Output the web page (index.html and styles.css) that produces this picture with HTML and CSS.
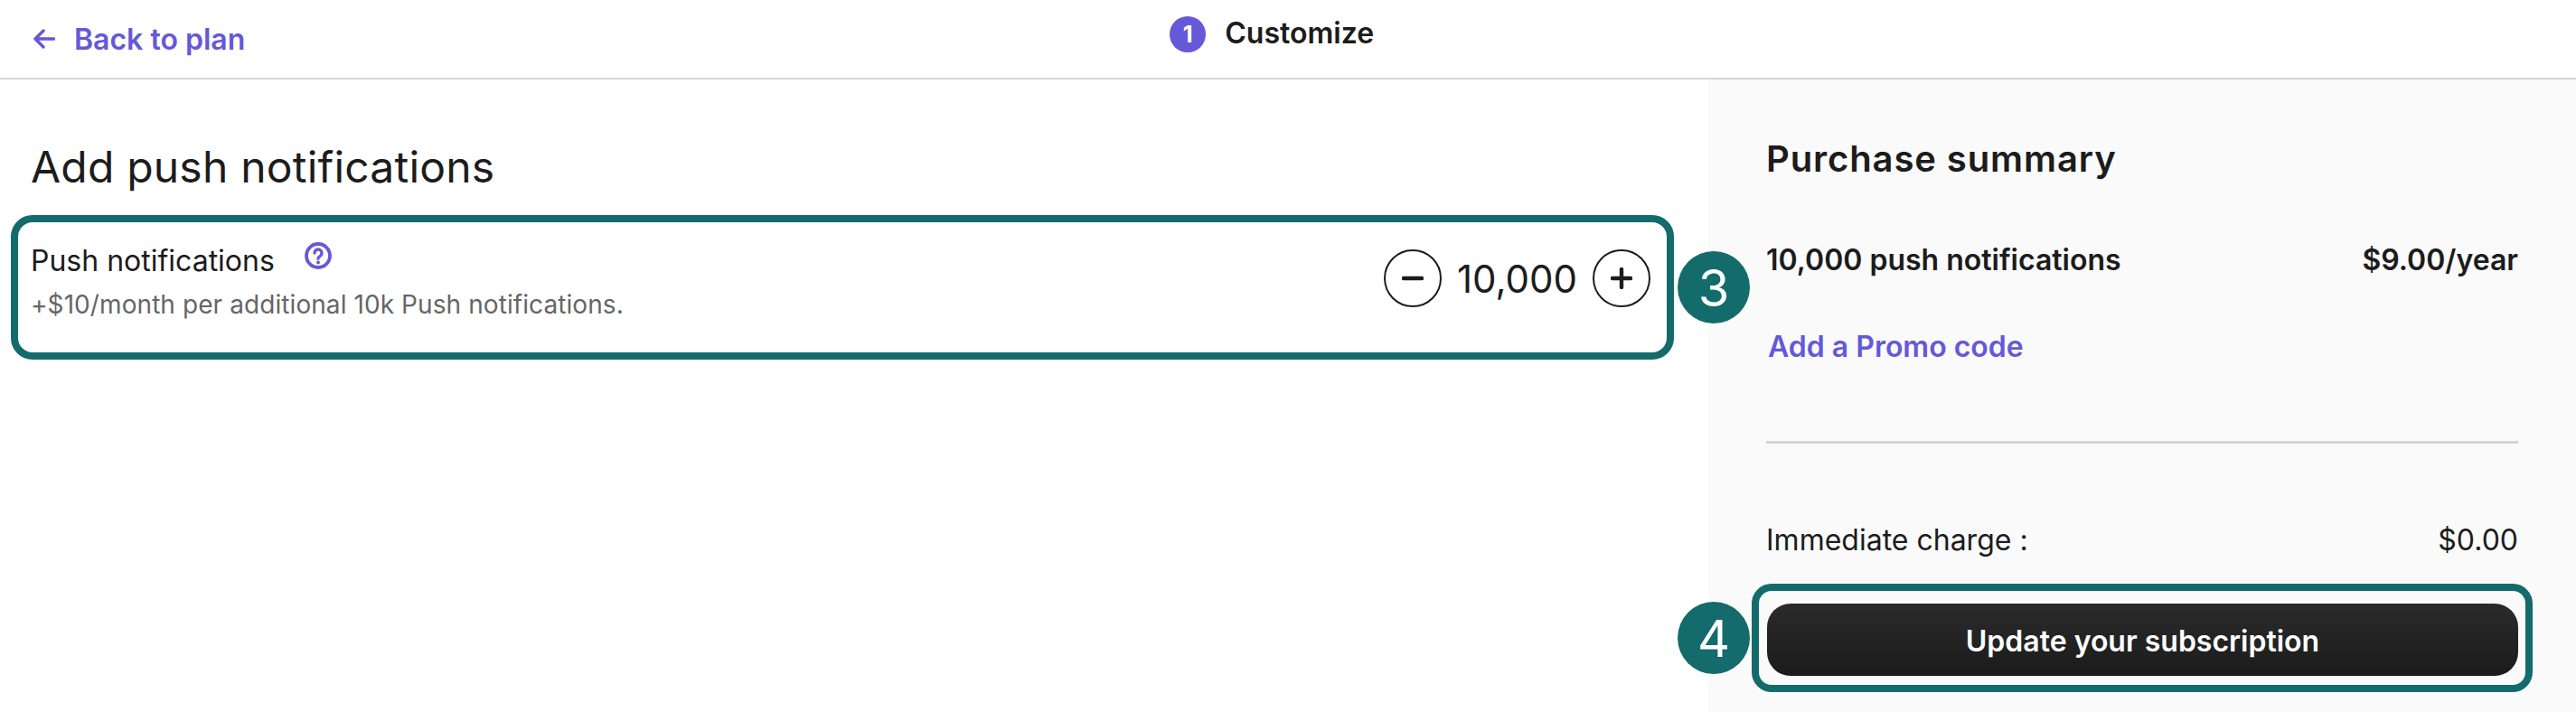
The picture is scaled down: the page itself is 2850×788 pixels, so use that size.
FILE: index.html
```html
<!DOCTYPE html>
<html lang="en">
<head>
<meta charset="utf-8">
<title>Customize</title>
<link rel="stylesheet" href="styles.css">
</head>
<body>
<header class="topbar">
  <a class="back" href="#">
    <svg class="back-icon" viewBox="0 0 24 24" fill="none" stroke="currentColor" stroke-width="3.4" stroke-linecap="round" stroke-linejoin="round"><path d="M22.5 12H2M11 3l-9 9 9 9"/></svg>
    <span>Back to plan</span>
  </a>
  <div class="step"><span class="step-num">1</span><span class="step-label">Customize</span></div>
</header>
<main class="layout">
  <section class="content">
    <h1 class="page-title">Add push notifications</h1>
    <div class="addon-frame">
      <div class="addon-text">
        <div class="addon-name">
          <span>Push notifications</span>
          <svg class="help-icon" viewBox="0 0 30 30" fill="none"><circle cx="15" cy="15" r="13" stroke="#6558d9" stroke-width="3.8"/><path d="M11 12a4 4 0 1 1 6.2 3.3c-1.4.9-2.2 1.6-2.2 3" stroke="#6558d9" stroke-width="3.4" stroke-linecap="round"/><circle cx="15" cy="22.4" r="2" fill="#6558d9"/></svg>
        </div>
        <p class="addon-desc">+$10/month per additional 10k Push notifications.</p>
      </div>
      <div class="stepper">
        <button class="round-btn" type="button"><svg viewBox="0 0 24 24"><path d="M2 12h20" stroke="#1c1c1c" stroke-width="4.4" stroke-linecap="round"/></svg></button>
        <span class="stepper-value">10,000</span>
        <button class="round-btn" type="button"><svg viewBox="0 0 24 24"><path d="M2 12h20M12 2v20" stroke="#1c1c1c" stroke-width="4.4" stroke-linecap="round"/></svg></button>
      </div>
      <span class="badge badge-three">3</span>
    </div>
  </section>
  <aside class="summary">
    <h2 class="summary-title">Purchase summary</h2>
    <div class="line line-strong"><span>10,000 push notifications</span><span>$9.00/year</span></div>
    <a class="promo" href="#">Add a Promo code</a>
    <hr class="divider">
    <div class="line line-normal"><span>Immediate charge :</span><span>$0.00</span></div>
    <div class="cta-frame">
      <span class="badge badge-four">4</span>
      <button class="cta" type="button">Update your subscription</button>
    </div>
  </aside>
</main>
</body>
</html>
```
FILE: styles.css
```css
* { box-sizing: border-box; }
html, body { margin: 0; height: 788px; overflow: hidden; }
body { font-family: Inter, "Liberation Sans", sans-serif; color: #1c1c1c; background: #fff; }

.topbar { height: 88px; border-bottom: 2px solid #d4d4d4; display: flex; align-items: flex-start; padding-left: 37px; }
.back { display: flex; align-items: center; gap: 21px; height: 86px; color: #6558d9; text-decoration: none; font-size: 32px; font-weight: 600; }
.back-icon { width: 24px; height: 24px; }
.step { display: flex; align-items: center; gap: 21px; margin-left: 1023px; height: 76px; }
.step-num { width: 40px; height: 40px; border-radius: 50%; background: #6558d9; color: #fff; font-size: 25px; font-weight: 700; display: flex; align-items: center; justify-content: center; }
.step-label { font-size: 32px; font-weight: 600; line-height: 36px; margin-top: -2px; }

.layout { display: grid; grid-template-columns: 1890px 960px; height: 700px; }
.content { padding: 69px 38px 0 12px; }
.page-title { margin: 0 0 25px 22px; font-size: 48px; line-height: 56px; font-weight: 400; letter-spacing: 0.2px; }
.addon-frame { position: relative; height: 160px; border: 8px solid #136c6b; border-radius: 24px; padding: 25px 18px 0 14px; display: flex; justify-content: space-between; align-items: flex-start; }
.addon-name { display: flex; align-items: flex-start; gap: 33px; font-size: 32px; line-height: 36px; }
.help-icon { width: 30px; height: 30px; margin-top: -3px; }
.addon-desc { margin: 12px 0 0; font-size: 28px; line-height: 36px; color: #666; letter-spacing: 0.08px; }
.stepper { display: flex; align-items: center; gap: 17px; margin-top: 5px; }
.round-btn { width: 64px; height: 64px; padding: 0; border: 2px solid #1c1c1c; border-radius: 50%; background: #fff; display: flex; align-items: center; justify-content: center; }
.round-btn svg { width: 24px; height: 24px; }
.stepper-value { font-size: 42px; line-height: 62px; padding-top: 2px; }
.badge { position: absolute; width: 80px; height: 80px; border-radius: 50%; background: #136c6b; color: #fff; font-size: 56px; padding-top: 2px; display: flex; align-items: center; justify-content: center; }
.badge-three { right: -92px; top: 32px; }
.badge-four { left: -90px; top: 12px; }

.summary { background: #fafafa; padding: 65px 64px 0; }
.summary-title { margin: 0 0 71px; font-size: 40px; line-height: 46px; font-weight: 600; letter-spacing: 0.9px; }
.line { display: flex; justify-content: space-between; font-size: 32px; line-height: 36px; }
.line-strong { font-weight: 600; }
.promo { display: block; margin: 60px 0 0 2px; color: #6558d9; text-decoration: none; font-size: 32px; line-height: 36px; font-weight: 600; }
.divider { margin: 86px 0 89px; height: 3px; border: 0; background: #d4d4d4; }
.cta-frame { position: relative; margin: 30px -16px 0; height: 120px; border: 8px solid #136c6b; border-radius: 22px; padding: 14px 8px 0 9px; }
.cta { display: block; width: 100%; height: 80px; border: 0; padding: 2px 0 0; border-radius: 26px; background: linear-gradient(#2b2b2b, #1b1b1b); color: #fff; font-family: inherit; font-size: 32px; font-weight: 600; }
```
